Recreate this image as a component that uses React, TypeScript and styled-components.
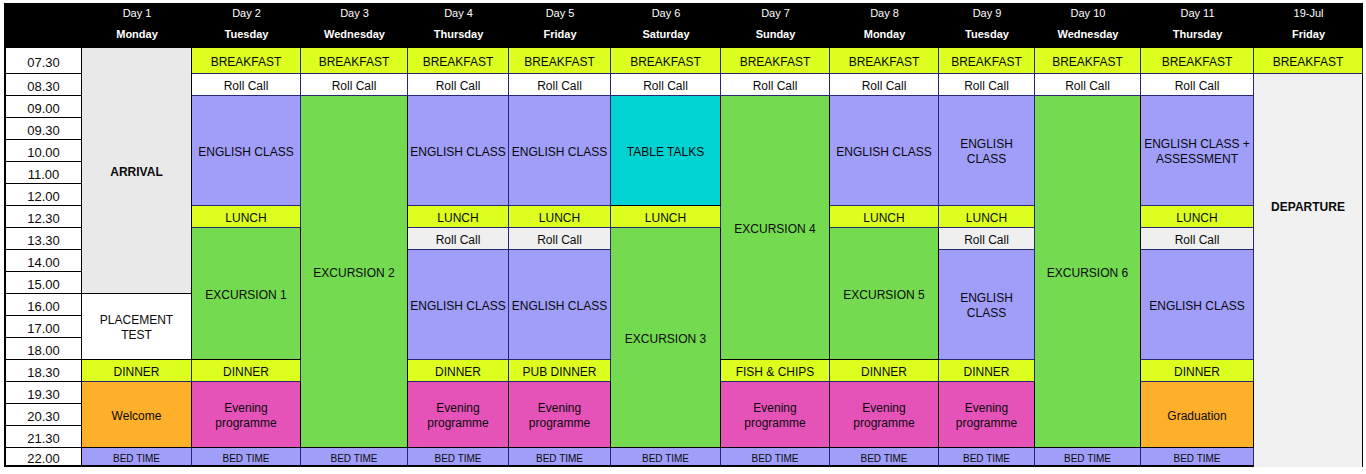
import React from "react";
import styled, { createGlobalStyle } from "styled-components";

const GlobalStyle = createGlobalStyle`
  html, body { margin: 0; padding: 0; background: #ffffff; }
  body { font-family: "Liberation Sans", Arial, Helvetica, sans-serif; color: #0a0a0a; }
`;

const COLS = [76, 110, 109, 107, 101, 102, 110, 109, 109, 96, 106, 113, 109];
const ROW_HEIGHTS = [26, ...Array(17).fill(22), 19];
const LAST_ROW = ROW_HEIGHTS.length - 1;

const NAVY = "#262673";
const BLACK = "#000000";

type Kind =
  | "meal"
  | "roll"
  | "rollGrey"
  | "english"
  | "excursion"
  | "evening"
  | "special"
  | "talks"
  | "bed"
  | "arrival"
  | "placement"
  | "departure"
  | "blank";

const KIND_STYLE: Record<Kind, { bg: string; line: string; size: number; bold?: boolean; noBottom?: boolean }> = {
  meal: { bg: "#dcff1f", line: NAVY, size: 12 },
  roll: { bg: "#ffffff", line: NAVY, size: 12 },
  rollGrey: { bg: "#efefef", line: NAVY, size: 12 },
  english: { bg: "#a09ef9", line: NAVY, size: 12 },
  excursion: { bg: "#74da50", line: BLACK, size: 12 },
  evening: { bg: "#e552b8", line: BLACK, size: 12 },
  special: { bg: "#feb02a", line: BLACK, size: 12 },
  talks: { bg: "#00d3d2", line: BLACK, size: 12 },
  bed: { bg: "#a09ef9", line: NAVY, size: 10 },
  arrival: { bg: "#e9e9e9", line: BLACK, size: 12, bold: true },
  placement: { bg: "#ffffff", line: BLACK, size: 12 },
  departure: { bg: "#f1f1f1", line: BLACK, size: 12, bold: true, noBottom: true },
  blank: { bg: "#f1f1f1", line: BLACK, size: 12, noBottom: true },
};

type Ev = { row: number; span?: number; text: string; kind: Kind };

const TIMES = [
  "07.30", "08.30", "09.00", "09.30", "10.00", "11.00", "12.00", "12.30", "13.30",
  "14.00", "15.00", "16.00", "17.00", "18.00", "18.30", "19.30", "20.30", "21.30", "22.00",
];

const HEADERS: [string, string][] = [
  ["Day 1", "Monday"],
  ["Day 2", "Tuesday"],
  ["Day 3", "Wednesday"],
  ["Day 4", "Thursday"],
  ["Day 5", "Friday"],
  ["Day 6", "Saturday"],
  ["Day 7", "Sunday"],
  ["Day 8", "Monday"],
  ["Day 9", "Tuesday"],
  ["Day 10", "Wednesday"],
  ["Day 11", "Thursday"],
  ["19-Jul", "Friday"],
];

const bf = (): Ev => ({ row: 0, text: "BREAKFAST", kind: "meal" });
const rc = (): Ev => ({ row: 1, text: "Roll Call", kind: "roll" });
const bed = (): Ev => ({ row: 18, text: "BED TIME", kind: "bed" });
const evening = (): Ev => ({ row: 15, span: 3, text: "Evening\nprogramme", kind: "evening" });

const classDay = (dinner: string): Ev[] => [
  bf(),
  rc(),
  { row: 2, span: 5, text: "ENGLISH CLASS", kind: "english" },
  { row: 7, text: "LUNCH", kind: "meal" },
  { row: 8, text: "Roll Call", kind: "rollGrey" },
  { row: 9, span: 5, text: "ENGLISH CLASS", kind: "english" },
  { row: 14, text: dinner, kind: "meal" },
  evening(),
  bed(),
];

const DAYS: Ev[][] = [
  [
    { row: 0, span: 11, text: "ARRIVAL", kind: "arrival" },
    { row: 11, span: 3, text: "PLACEMENT\nTEST", kind: "placement" },
    { row: 14, text: "DINNER", kind: "meal" },
    { row: 15, span: 3, text: "Welcome", kind: "special" },
    bed(),
  ],
  [
    bf(),
    rc(),
    { row: 2, span: 5, text: "ENGLISH CLASS", kind: "english" },
    { row: 7, text: "LUNCH", kind: "meal" },
    { row: 8, span: 6, text: "EXCURSION 1", kind: "excursion" },
    { row: 14, text: "DINNER", kind: "meal" },
    evening(),
    bed(),
  ],
  [bf(), rc(), { row: 2, span: 16, text: "EXCURSION 2", kind: "excursion" }, bed()],
  classDay("DINNER"),
  classDay("PUB DINNER"),
  [
    bf(),
    rc(),
    { row: 2, span: 5, text: "TABLE TALKS", kind: "talks" },
    { row: 7, text: "LUNCH", kind: "meal" },
    { row: 8, span: 10, text: "EXCURSION 3", kind: "excursion" },
    bed(),
  ],
  [
    bf(),
    rc(),
    { row: 2, span: 12, text: "EXCURSION 4", kind: "excursion" },
    { row: 14, text: "FISH & CHIPS", kind: "meal" },
    evening(),
    bed(),
  ],
  [
    bf(),
    rc(),
    { row: 2, span: 5, text: "ENGLISH CLASS", kind: "english" },
    { row: 7, text: "LUNCH", kind: "meal" },
    { row: 8, span: 6, text: "EXCURSION 5", kind: "excursion" },
    { row: 14, text: "DINNER", kind: "meal" },
    evening(),
    bed(),
  ],
  classDay("DINNER"),
  [bf(), rc(), { row: 2, span: 16, text: "EXCURSION 6", kind: "excursion" }, bed()],
  [
    bf(),
    rc(),
    { row: 2, span: 5, text: "ENGLISH CLASS +\nASSESSMENT", kind: "english" },
    { row: 7, text: "LUNCH", kind: "meal" },
    { row: 8, text: "Roll Call", kind: "rollGrey" },
    { row: 9, span: 5, text: "ENGLISH CLASS", kind: "english" },
    { row: 14, text: "DINNER", kind: "meal" },
    { row: 15, span: 3, text: "Graduation", kind: "special" },
    bed(),
  ],
  [
    bf(),
    { row: 1, span: 12, text: "DEPARTURE", kind: "departure" },
    { row: 13, span: 6, text: "", kind: "blank" },
  ],
];

const Page = styled.div`
  padding: 3px 0 0 4px;
`;

const Grid = styled.div`
  display: grid;
  grid-template-columns: ${COLS.map((c) => `${c}px`).join(" ")};
  grid-template-rows: 45px ${ROW_HEIGHTS.map((h) => `${h}px`).join(" ")};
  width: max-content;
  border-left: 2px solid #000;
`;

const HeaderCell = styled.div<{ $col: number }>`
  grid-column: ${(p) => p.$col + 1};
  grid-row: 1;
  background: #000;
  color: #ffffff;
  display: flex;
  flex-direction: column;
  align-items: center;
  font-size: 11px;
  line-height: 21px;
`;

const DayName = styled.span`
  font-weight: bold;
`;

const TimeCell = styled.div<{ $row: number; $last: boolean }>`
  grid-column: 1;
  grid-row: ${(p) => p.$row + 2};
  box-sizing: border-box;
  background: #ffffff;
  border-right: 1px solid #000;
  border-bottom: ${(p) => (p.$last ? "2px" : "1px")} solid #000;
  padding-top: 4px;
  display: flex;
  align-items: center;
  justify-content: center;
  font-size: 13px;
  line-height: 15px;
`;

const Cell = styled.div<{
  $col: number;
  $row: number;
  $span: number;
  $kind: Kind;
  $last: boolean;
}>`
  grid-column: ${(p) => p.$col + 1};
  grid-row: ${(p) => `${p.$row + 2} / span ${p.$span}`};
  box-sizing: border-box;
  background: ${(p) => KIND_STYLE[p.$kind].bg};
  border-right: 1px solid ${(p) => KIND_STYLE[p.$kind].line};
  border-bottom: ${(p) =>
    KIND_STYLE[p.$kind].noBottom
      ? "none"
      : p.$last
      ? "2px solid #000"
      : `1px solid ${KIND_STYLE[p.$kind].line}`};
  padding-top: ${(p) => (p.$span > 2 ? 3 : 4)}px;
  display: flex;
  align-items: center;
  justify-content: center;
  text-align: center;
  white-space: pre-line;
  font-size: ${(p) => KIND_STYLE[p.$kind].size}px;
  font-weight: ${(p) => (KIND_STYLE[p.$kind].bold ? "bold" : "normal")};
  line-height: 15px;
`;

export default function App() {
  return (
    <>
      <GlobalStyle />
      <Page>
        <Grid>
          <HeaderCell $col={0} />
          {HEADERS.map(([d, n], i) => (
            <HeaderCell key={d} $col={i + 1}>
              <span>{d}</span>
              <DayName>{n}</DayName>
            </HeaderCell>
          ))}
          {TIMES.map((t, r) => (
            <TimeCell key={t} $row={r} $last={r === LAST_ROW}>
              {t}
            </TimeCell>
          ))}
          {DAYS.map((evs, d) =>
            evs.map((e) => {
              const span = e.span ?? 1;
              return (
                <Cell
                  key={`${d}-${e.row}`}
                  $col={d + 1}
                  $row={e.row}
                  $span={span}
                  $kind={e.kind}
                  $last={e.row + span - 1 === LAST_ROW}
                >
                  {e.text}
                </Cell>
              );
            })
          )}
        </Grid>
      </Page>
    </>
  );
}
